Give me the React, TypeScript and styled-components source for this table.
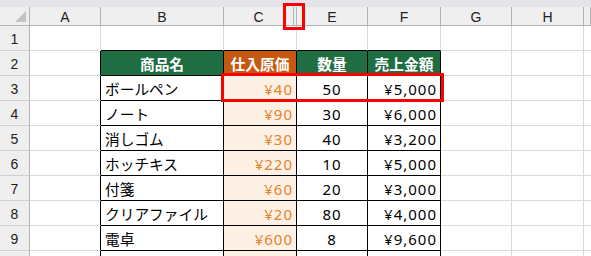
import React from "react";
import styled, { createGlobalStyle } from "styled-components";

const GlobalStyle = createGlobalStyle`
  html, body { margin: 0; padding: 0; background: #ffffff; overflow: hidden; }
  #root { width: 591px; height: 256px; overflow: hidden; }
`;

const COLS = "30px 71px 123px 70px 3px 71px 73px 71px 72px 1fr";
const GRID = "#dadada";
const HDR_LINE = "#b4b4b4";
const BLACK = "#000000";
const GREEN = "#1f6e43";
const ORANGE_BG = "#c65911";
const PEACH = "#fdf0e4";
const ORANGE_TX = "#e8812b";

const Sheet = styled.div`
  position: relative;
  width: 591px;
  height: 256px;
  overflow: hidden;
  font-family: "Noto Sans CJK JP", "Noto Sans", sans-serif;
`;

const TopBar = styled.div`
  height: 7px;
  background: #e3e3e8;
`;

const Row = styled.div<{ $h: number }>`
  display: grid;
  grid-template-columns: ${COLS};
  height: ${(p) => p.$h}px;
`;

const ColHead = styled.div<{ $span?: number }>`
  grid-column: span ${(p) => p.$span ?? 1};
  background: #efefef;
  border-right: 1px solid ${HDR_LINE};
  border-bottom: 1px solid ${HDR_LINE};
  display: flex;
  align-items: center;
  justify-content: center;
  font-family: "Liberation Sans", Arial, sans-serif;
  font-size: 14px;
  color: #222;
  padding-top: 1px;
`;

const Corner = styled(ColHead)`
  position: relative;
`;

const Triangle = styled.div`
  position: absolute;
  right: 3px;
  bottom: 3px;
  width: 0;
  height: 0;
  border-left: 11px solid transparent;
  border-bottom: 11px solid #c4c4c4;
`;

const RowHead = styled.div`
  background: #efefef;
  border-right: 1px solid ${HDR_LINE};
  border-bottom: 1px solid #d0d0d0;
  display: flex;
  align-items: center;
  justify-content: center;
  font-family: "Liberation Sans", Arial, sans-serif;
  font-size: 14px;
  color: #222;
  padding-top: 1px;
  overflow: hidden;
`;

type Align = "left" | "center" | "right";

const Cell = styled.div<{
  $span?: number;
  $r?: string;
  $b?: string;
  $bg?: string;
  $color?: string;
  $align?: Align;
  $bold?: boolean;
}>`
  grid-column: span ${(p) => p.$span ?? 1};
  min-width: 0;
  background: ${(p) => p.$bg ?? "#ffffff"};
  border-right: 1px solid ${(p) => p.$r ?? GRID};
  border-bottom: 1px solid ${(p) => p.$b ?? GRID};
  display: flex;
  align-items: center;
  justify-content: ${(p) =>
    p.$align === "right" ? "flex-end" : p.$align === "center" ? "center" : "flex-start"};
  padding: 1px ${(p) => (p.$align === "right" ? 3 : 4)}px 0 4px;
  box-sizing: border-box;
  color: ${(p) => p.$color ?? "#000"};
  font-weight: ${(p) => (p.$bold ? 700 : 400)};
  font-size: 14.7px;
  white-space: nowrap;
  overflow: hidden;
`;

const Num = styled.span`
  font-family: "Noto Sans", "Noto Sans CJK JP", sans-serif;
  font-size: 15px;
  letter-spacing: 1px;
`;

const Highlight = styled.div<{ $x: number; $y: number; $w: number; $h: number }>`
  position: absolute;
  left: ${(p) => p.$x}px;
  top: ${(p) => p.$y}px;
  width: ${(p) => p.$w}px;
  height: ${(p) => p.$h}px;
  border: 3px solid #ff0000;
  box-sizing: border-box;
  pointer-events: none;
`;

const items = [
  { name: "ボールペン", cost: "¥40", qty: "50", total: "¥5,000" },
  { name: "ノート", cost: "¥90", qty: "30", total: "¥6,000" },
  { name: "消しゴム", cost: "¥30", qty: "40", total: "¥3,200" },
  { name: "ホッチキス", cost: "¥220", qty: "10", total: "¥5,000" },
  { name: "付箋", cost: "¥60", qty: "20", total: "¥3,000" },
  { name: "クリアファイル", cost: "¥20", qty: "80", total: "¥4,000" },
  { name: "電卓", cost: "¥600", qty: "8", total: "¥9,600" },
  { name: "マーカー", cost: "", qty: "", total: "" },
];

const TrailCells = () => (
  <>
    <Cell />
    <Cell />
    <Cell />
  </>
);

export default function App() {
  return (
    <>
      <GlobalStyle />
      <Sheet>
        <TopBar />
        <Row $h={19}>
          <Corner>
            <Triangle />
          </Corner>
          <ColHead>A</ColHead>
          <ColHead>B</ColHead>
          <ColHead>C</ColHead>
          <ColHead />
          <ColHead>E</ColHead>
          <ColHead>F</ColHead>
          <ColHead>G</ColHead>
          <ColHead>H</ColHead>
          <ColHead />
        </Row>

        <Row $h={25}>
          <RowHead>1</RowHead>
          <Cell />
          <Cell $b={BLACK} />
          <Cell $span={2} $b={BLACK} />
          <Cell $b={BLACK} />
          <Cell $b={BLACK} />
          <TrailCells />
        </Row>

        <Row $h={25}>
          <RowHead>2</RowHead>
          <Cell $r={BLACK} />
          <Cell $r={BLACK} $b={BLACK} $bg={GREEN} $color="#fff" $bold $align="center">
            商品名
          </Cell>
          <Cell $span={2} $r={BLACK} $b={BLACK} $bg={ORANGE_BG} $color="#fff" $bold $align="center">
            仕入原価
          </Cell>
          <Cell $r={BLACK} $b={BLACK} $bg={GREEN} $color="#fff" $bold $align="center">
            数量
          </Cell>
          <Cell $r={BLACK} $b={BLACK} $bg={GREEN} $color="#fff" $bold $align="center">
            売上金額
          </Cell>
          <TrailCells />
        </Row>

        {items.map((it, i) => (
          <Row $h={25} key={i}>
            <RowHead>{i + 3}</RowHead>
            <Cell $r={BLACK} />
            <Cell $r={BLACK} $b={BLACK}>
              {it.name}
            </Cell>
            <Cell $span={2} $r={BLACK} $b={BLACK} $bg={PEACH} $color={ORANGE_TX} $align="right">
              <Num>{it.cost}</Num>
            </Cell>
            <Cell $r={BLACK} $b={BLACK} $align="center">
              <Num>{it.qty}</Num>
            </Cell>
            <Cell $r={BLACK} $b={BLACK} $align="right">
              <Num>{it.total}</Num>
            </Cell>
            <TrailCells />
          </Row>
        ))}

        <Highlight $x={221} $y={73} $w={223} $h={29} />
        <Highlight $x={283} $y={3} $w={22} $h={27} />
      </Sheet>
    </>
  );
}
